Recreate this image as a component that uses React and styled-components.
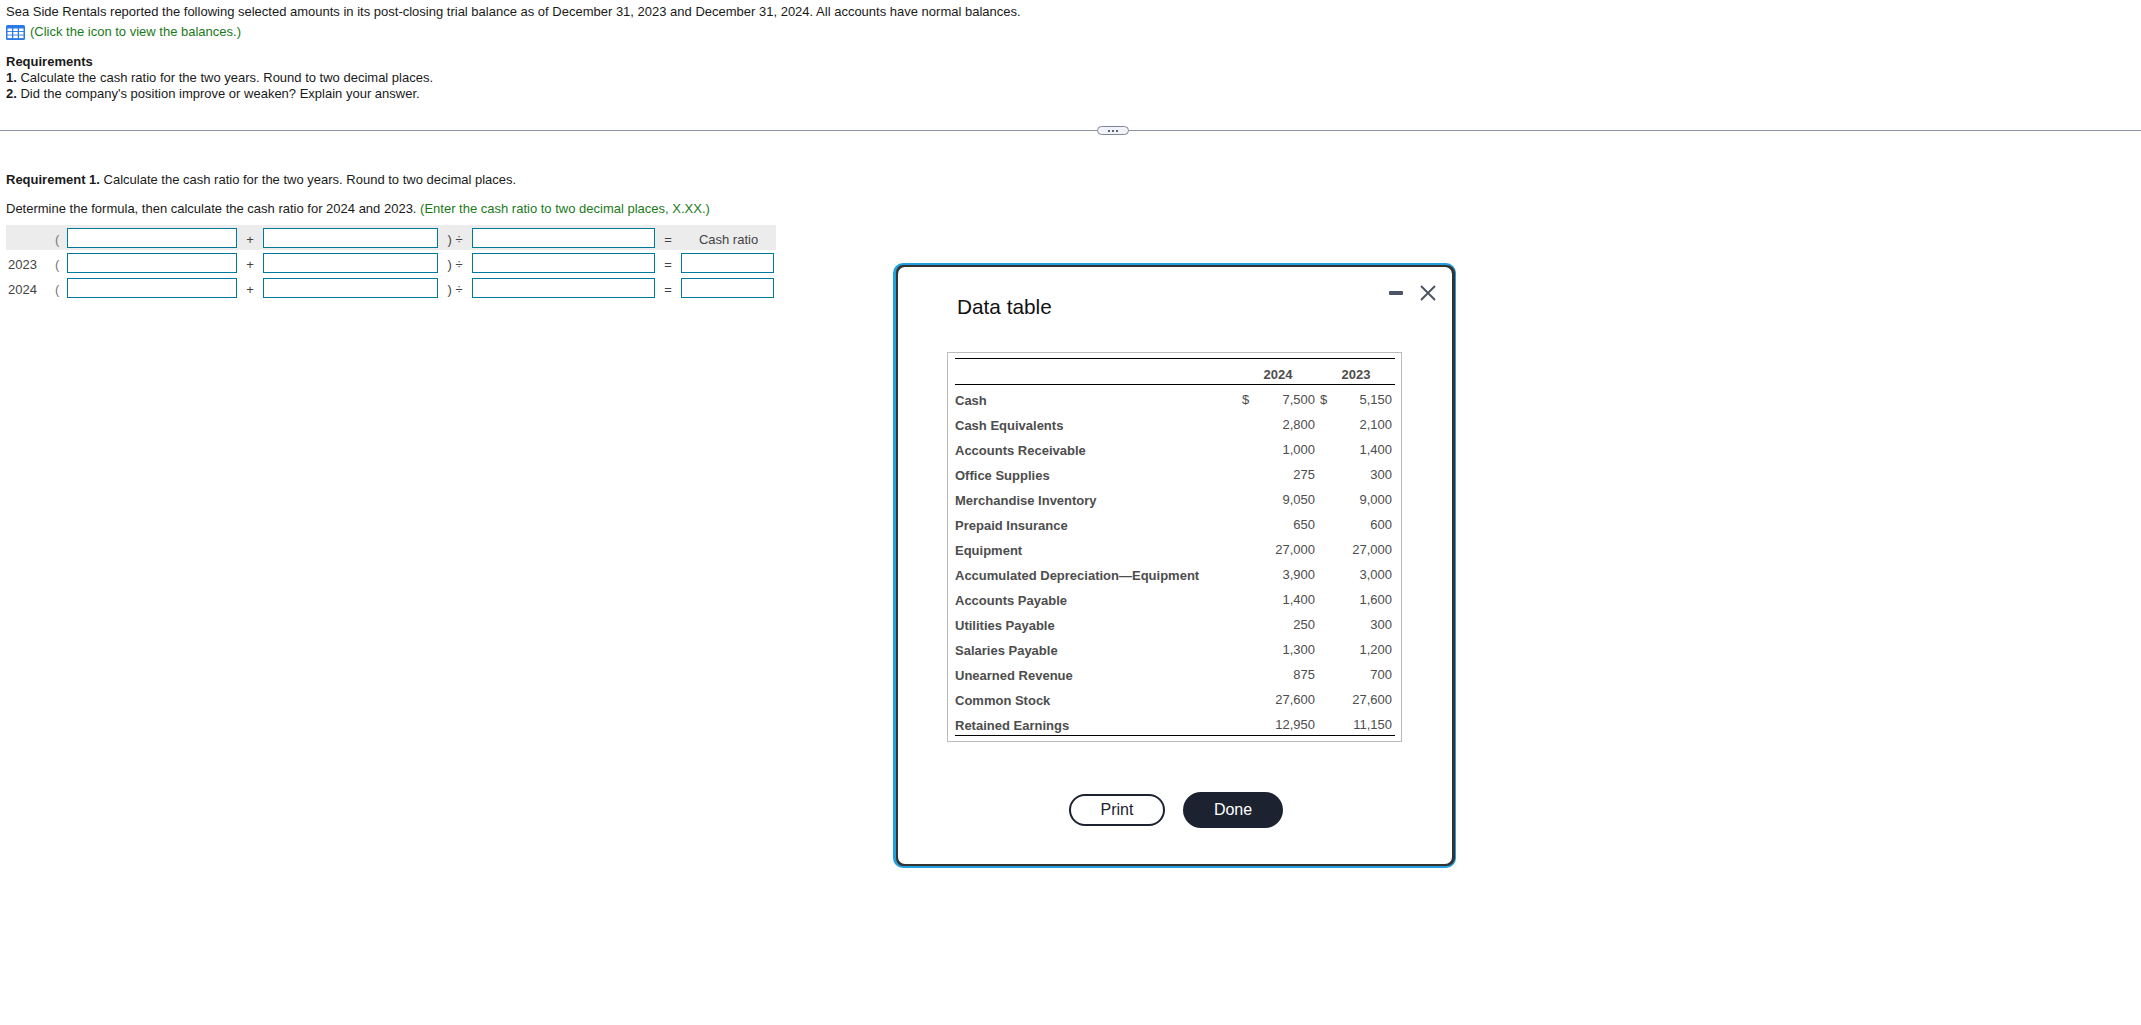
import React from "react";
import styled, { createGlobalStyle } from "styled-components";

const GlobalStyle = createGlobalStyle`
  html, body {
    margin: 0;
    padding: 0;
    background: #fff;
  }
  body {
    font-family: "Liberation Sans", Arial, sans-serif;
    font-size: 13px;
    color: #1a1a1a;
  }
`;

const Page = styled.div`
  position: relative;
  width: 2141px;
  height: 1025px;
  overflow: hidden;
`;

const Question = styled.div`
  height: 130px;
  padding: 4px 0 0 6px;
  box-sizing: border-box;
`;

const Line = styled.div`
  height: ${(p) => p.$h || 16}px;
  line-height: 16px;
  margin-top: ${(p) => p.$mt || 0}px;
  display: flex;
  align-items: center;
  gap: 5px;
  white-space: pre;
`;

const Hint = styled.span`
  color: #1a7a1a;
`;

const Divider = styled.div`
  position: relative;
  height: 1px;
  background: #8a93a3;
`;

const Pill = styled.div`
  position: absolute;
  left: 1097px;
  top: -4px;
  width: 32px;
  height: 9px;
  box-sizing: border-box;
  border: 1px solid #7f8899;
  border-radius: 5px;
  background: #f1f3f6;
  display: flex;
  align-items: center;
  justify-content: center;
  gap: 2px;
`;

const Dot = styled.i`
  width: 2px;
  height: 2px;
  background: #5a6475;
`;

const Work = styled.div`
  padding: 41px 0 0 6px;
`;

const FormulaGrid = styled.div`
  width: 770px;
  margin-top: 8px;
`;

const FormulaRow = styled.div`
  display: grid;
  grid-template-columns: 46px 15px 170px 26px 175px 34px 183px 26px 93px 2px;
  align-items: center;
  height: 25px;
  background: ${(p) => (p.$head ? "#ececec" : "transparent")};
  color: #444;
`;

const Year = styled.span`
  padding: 4px 0 0 2px;
`;

const Sym = styled.span`
  padding-top: 4px;
  text-align: center;
`;

const Paren = styled.span`
  padding: 4px 0 0 3px;
  color: #777;
`;

const CellInput = styled.div`
  height: 20px;
  box-sizing: border-box;
  border: 1px solid #007a9c;
  background: #fff;
`;

const RatioHead = styled.span`
  padding: 4px 0 0 2px;
  text-align: center;
`;

const Modal = styled.div`
  position: absolute;
  left: 893px;
  top: 263px;
  width: 563px;
  height: 605px;
  box-sizing: border-box;
  border: 2px solid #22a0e0;
  border-left-width: 3px;
  border-right-width: 1px;
  border-radius: 10px;
  padding: 2px 3px 2px 2px;
  background: #333;
`;

const ModalInner = styled.div`
  position: relative;
  height: 100%;
  background: #fff;
  border-radius: 7px;
  padding: 28px 0 0 59px;
  box-sizing: border-box;
`;

const Title = styled.h2`
  margin: 0;
  font-size: 20.8px;
  font-weight: 400;
  line-height: 24px;
  color: #111;
`;

const WinControls = styled.div`
  position: absolute;
  top: 18px;
  right: 16px;
  display: flex;
  align-items: center;
  gap: 17px;
`;

const Minimize = styled.i`
  width: 14px;
  height: 4px;
  background: #4b5563;
  border-radius: 1px;
`;

const TableBox = styled.div`
  width: 455px;
  height: 390px;
  margin: 33px 0 0 -10px;
  padding: 5px 7px 0;
  box-sizing: border-box;
  border: 1px solid #bbb;
`;

const DataTable = styled.table`
  width: 440px;
  border-collapse: collapse;
  table-layout: fixed;
  border-top: 1px solid #000;
  border-bottom: 1px solid #000;
  color: #4d4d4d;

  td {
    box-sizing: border-box;
    height: 25px;
  }

  tbody tr:last-child td {
    height: 26px;
  }
`;

const HeadCell = styled.th`
  height: 26px;
  padding: 5px ${(p) => p.$pr || 0}px 0 0;
  box-sizing: border-box;
  font-weight: 700;
  text-align: center;
  border-bottom: 1px solid #000;
`;

const Label = styled.td`
  padding: 6px 0 0 0;
  font-weight: 700;
`;

const Cur = styled.td`
  padding: 4px 0 0 0;
  text-align: left;
`;

const Num = styled.td`
  padding: 4px ${(p) => p.$pr}px 0 0;
  text-align: right;
`;

const Actions = styled.div`
  display: flex;
  align-items: center;
  gap: 18px;
  margin: 50px 0 0 112px;
`;

const PrintBtn = styled.button`
  width: 96px;
  height: 32px;
  border: 2px solid #1c2230;
  border-radius: 16px;
  background: #fff;
  color: #1c2230;
  font: 16px "Liberation Sans", Arial, sans-serif;
`;

const DoneBtn = styled.button`
  width: 100px;
  height: 36px;
  border: 0;
  border-radius: 18px;
  background: #1c2230;
  color: #fff;
  font: 16px "Liberation Sans", Arial, sans-serif;
`;

const rows = [
  ["Cash", "7,500", "5,150", true],
  ["Cash Equivalents", "2,800", "2,100"],
  ["Accounts Receivable", "1,000", "1,400"],
  ["Office Supplies", "275", "300"],
  ["Merchandise Inventory", "9,050", "9,000"],
  ["Prepaid Insurance", "650", "600"],
  ["Equipment", "27,000", "27,000"],
  ["Accumulated Depreciation—Equipment", "3,900", "3,000"],
  ["Accounts Payable", "1,400", "1,600"],
  ["Utilities Payable", "250", "300"],
  ["Salaries Payable", "1,300", "1,200"],
  ["Unearned Revenue", "875", "700"],
  ["Common Stock", "27,600", "27,600"],
  ["Retained Earnings", "12,950", "11,150"],
];

function TableIcon() {
  return (
    <svg width="19" height="15" viewBox="0 0 19 15">
      <rect width="19" height="15" rx="1.5" fill="#2b7be4" />
      {[3.5, 7, 10.5].map((y) =>
        [1.5, 7.25, 13].map((x) => (
          <rect key={`${x}-${y}`} x={x} y={y} width="4.5" height="2.6" fill="#fff" />
        ))
      )}
    </svg>
  );
}

function Close() {
  return (
    <svg width="16" height="16" viewBox="0 0 16 16">
      <path d="M1 1 L15 15 M15 1 L1 15" stroke="#4b5563" strokeWidth="2" fill="none" />
    </svg>
  );
}

function Formula({ year, head }) {
  return (
    <FormulaRow $head={head}>
      <Year>{year}</Year>
      <Paren>(</Paren>
      <CellInput />
      <Sym>+</Sym>
      <CellInput />
      <Sym>) ÷</Sym>
      <CellInput />
      <Sym>=</Sym>
      {head ? <RatioHead>Cash ratio</RatioHead> : <CellInput />}
      <span />
    </FormulaRow>
  );
}

export default function App() {
  return (
    <Page>
      <GlobalStyle />
      <Question>
        <Line>Sea Side Rentals reported the following selected amounts in its post-closing trial balance as of December 31, 2023 and December 31, 2024. All accounts have normal balances.</Line>
        <Line $h={20} $mt={2}>
          <TableIcon />
          <Hint>(Click the icon to view the balances.)</Hint>
        </Line>
        <Line $mt={12}><b>Requirements</b></Line>
        <Line><span><b>1.</b> Calculate the cash ratio for the two years. Round to two decimal places.</span></Line>
        <Line><span><b>2.</b> Did the company's position improve or weaken? Explain your answer.</span></Line>
      </Question>
      <Divider>
        <Pill><Dot /><Dot /><Dot /></Pill>
      </Divider>
      <Work>
        <Line><span><b>Requirement 1.</b> Calculate the cash ratio for the two years. Round to two decimal places.</span></Line>
        <Line $mt={13}>
          <span>Determine the formula, then calculate the cash ratio for 2024 and 2023. <Hint>(Enter the cash ratio to two decimal places, X.XX.)</Hint></span>
        </Line>
        <FormulaGrid>
          <Formula head />
          <Formula year="2023" />
          <Formula year="2024" />
        </FormulaGrid>
      </Work>
      <Modal>
        <ModalInner>
          <Title>Data table</Title>
          <WinControls>
            <Minimize />
            <Close />
          </WinControls>
          <TableBox>
            <DataTable>
              <colgroup>
                <col style={{ width: 287 }} />
                <col style={{ width: 20 }} />
                <col style={{ width: 58 }} />
                <col style={{ width: 18 }} />
                <col style={{ width: 57 }} />
              </colgroup>
              <thead>
                <tr>
                  <HeadCell />
                  <HeadCell colSpan={2} $pr={6}>2024</HeadCell>
                  <HeadCell colSpan={2} $pr={3}>2023</HeadCell>
                </tr>
              </thead>
              <tbody>
                {rows.map(([name, a, b, cur]) => (
                  <tr key={name}>
                    <Label>{name}</Label>
                    <Cur>{cur ? "$" : ""}</Cur>
                    <Num $pr={5}>{a}</Num>
                    <Cur>{cur ? "$" : ""}</Cur>
                    <Num $pr={3}>{b}</Num>
                  </tr>
                ))}
              </tbody>
            </DataTable>
          </TableBox>
          <Actions>
            <PrintBtn>Print</PrintBtn>
            <DoneBtn>Done</DoneBtn>
          </Actions>
        </ModalInner>
      </Modal>
    </Page>
  );
}
